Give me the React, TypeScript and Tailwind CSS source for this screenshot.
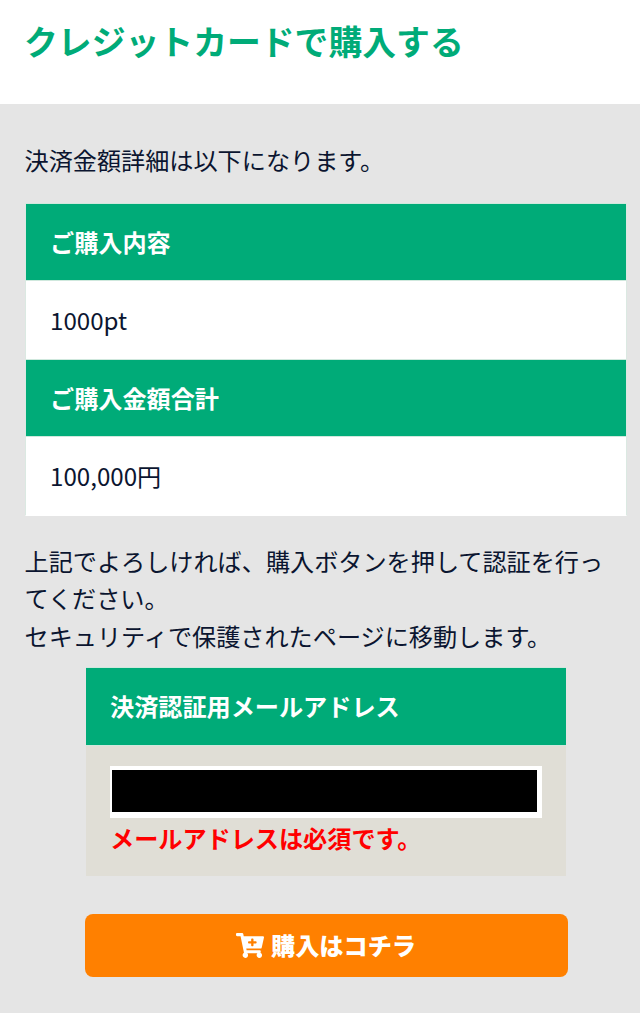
import { FaCartPlus } from "react-icons/fa";

const font = { fontFamily: '"Noto Sans CJK JP", "Noto Sans", sans-serif' };

function TableHead({ children }: { children: string }) {
  return (
    <div className="bg-[#00ab78] border-y border-[#cfe8dd] h-[78px] pl-[24px] pt-[2px] flex items-center text-white font-bold text-[24.15px]">
      {children}
    </div>
  );
}

function TableCell({ children }: { children: string }) {
  return (
    <div className="bg-white h-[78px] pl-[24px] pt-[2px] flex items-center text-[24.15px] text-[#0b1530]">
      {children}
    </div>
  );
}

export default function App() {
  return (
    <div style={font} className="w-[640px] h-[1013px] bg-[#e5e5e5] overflow-hidden flex flex-col">
      <header className="bg-white h-[104px] pl-[24px] pt-[16px] shrink-0">
        <h1 className="text-[#00ab78] font-bold text-[33.85px] leading-[50px]">
          クレジットカードで購入する
        </h1>
      </header>

      <main className="flex-1 pl-[24.5px] text-[#0b1530]">
        <p className="text-[24.15px] leading-[37.5px] mt-[37px]">決済金額詳細は以下になります。</p>

        <div className="mt-[24px] ml-[0.5px] w-[602px] border-x border-[#dbe9e2] border-b border-b-white">
          <TableHead>ご購入内容</TableHead>
          <TableCell>1000pt</TableCell>
          <TableHead>ご購入金額合計</TableHead>
          <TableCell>100,000円</TableCell>
        </div>

        <p className="text-[24.15px] leading-[37.5px] mt-[26px] w-[590px]">
          上記でよろしければ、購入ボタンを押して認証を行ってください。
          <br />
          セキュリティで保護されたページに移動します。
        </p>

        <section className="mt-[13px] ml-[61.5px] w-[480px] bg-[#e0ded6]">
          <div className="bg-[#00ab78] border-y border-[#cfe8dd] h-[79px] pl-[24px] flex items-center text-white font-bold text-[24.15px]">
            決済認証用メールアドレス
          </div>
          <div className="pl-[24px] pr-[24px] pt-[20px] pb-[20px]">
            <div className="h-[52px] bg-black border-t-[4px] border-b-[6px] border-l-[2px] border-r-[5px] border-white" />
            <p className="text-[#ff0000] font-bold text-[24.15px] leading-[36px] mt-[2px]">
              メールアドレスは必須です。
            </p>
          </div>
        </section>

        <button className="mt-[38px] ml-[60px] w-[483px] h-[63px] bg-[#ff8000] rounded-[8px] flex items-center justify-center gap-[7px] text-white font-black text-[24.15px]">
          <FaCartPlus className="w-[28px] h-[25px]" />
          購入はコチラ
        </button>
      </main>
    </div>
  );
}
